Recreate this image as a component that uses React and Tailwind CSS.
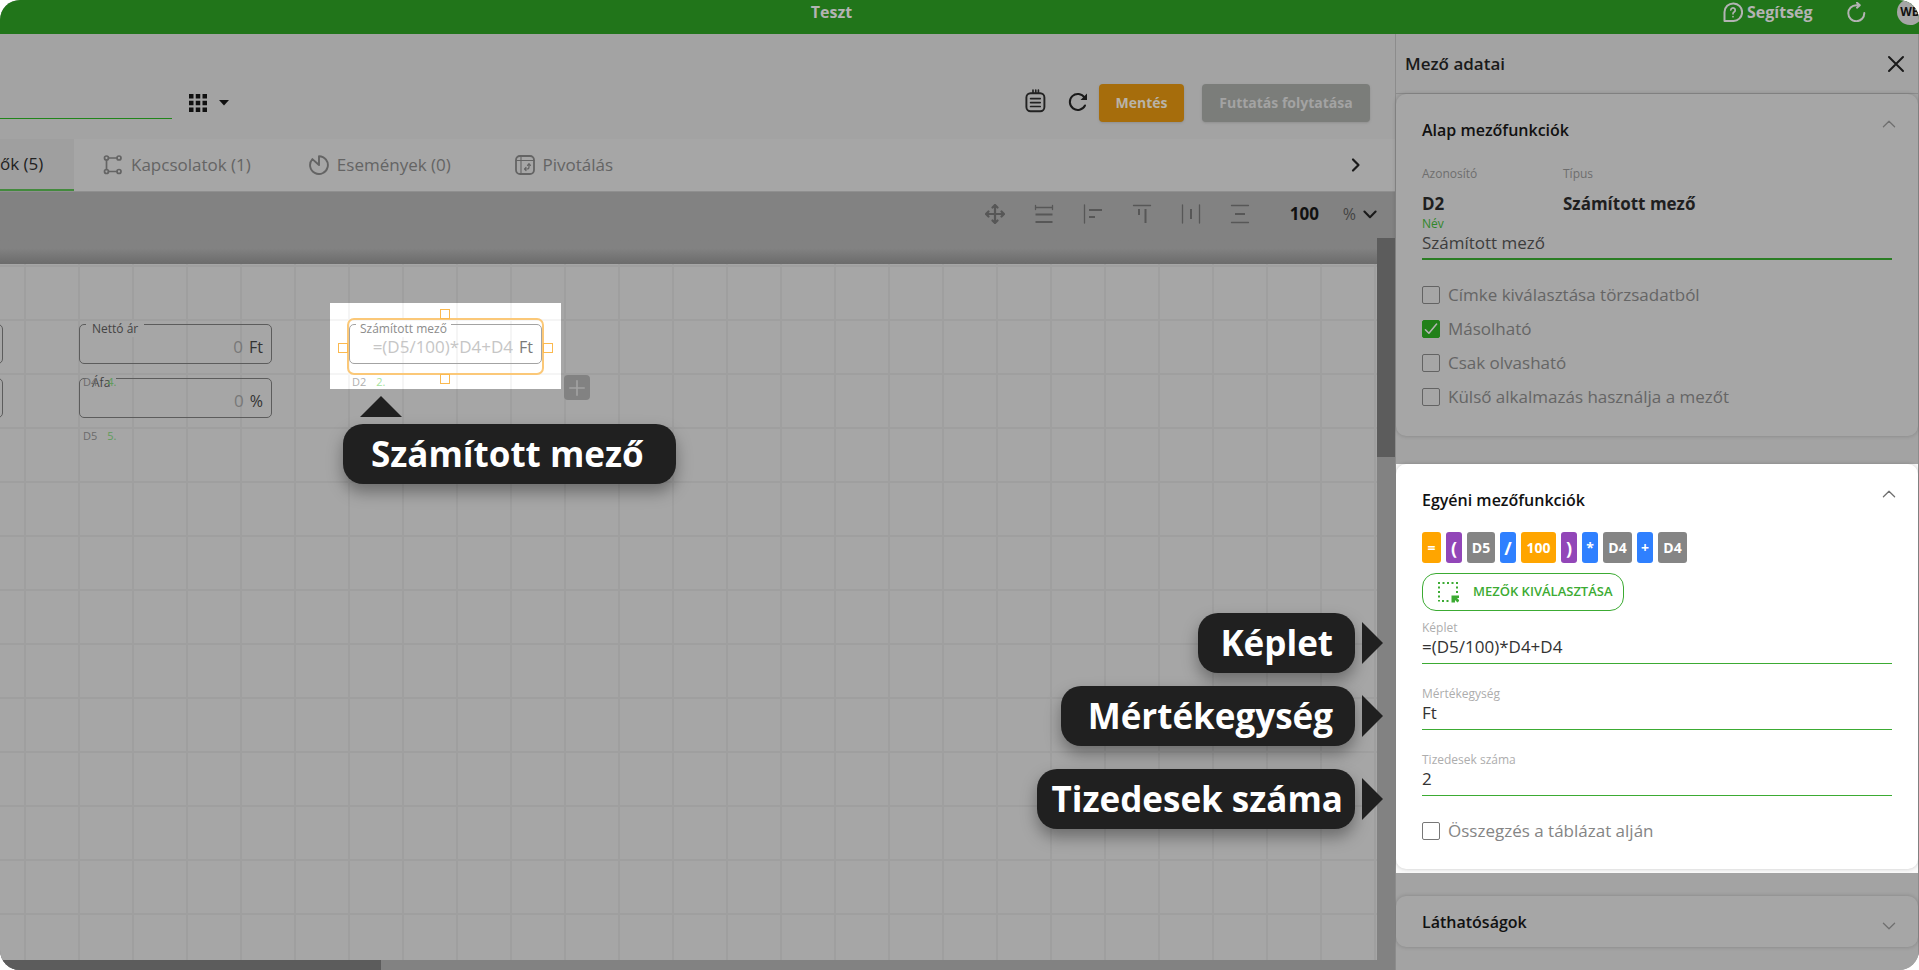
import React, { useState } from 'react';

const tabs = [
  { label: 'Kapcsolatok (1)', icon: 'links' },
  { label: 'Események (0)', icon: 'events' },
  { label: 'Pivotálás', icon: 'pivot' },
];

const formula = [
  { text: '=', className: 'w-[19px] bg-[#ffa500] text-sm' },
  { text: '(', className: 'w-4 bg-[#9246b8] text-lg' },
  { text: 'D5', className: 'w-7 bg-[#858585] text-sm' },
  { text: '/', className: 'w-4 bg-[#2f80ff] text-lg' },
  { text: '100', className: 'w-[35px] bg-[#ffa500] text-sm' },
  { text: ')', className: 'w-4 bg-[#9246b8] text-lg' },
  { text: '*', className: 'w-4 bg-[#2f80ff] text-sm' },
  { text: 'D4', className: 'w-[29px] bg-[#858585] text-sm' },
  { text: '+', className: 'w-4 bg-[#2f80ff] text-sm' },
  { text: 'D4', className: 'w-[29px] bg-[#858585] text-sm' },
];

const Svg = ({ className = 'h-5 w-5', width = 1.6, children }) => (
  <svg
    viewBox="0 0 20 20"
    className={`shrink-0 ${className}`}
    fill="none"
    stroke="currentColor"
    strokeWidth={width}
    strokeLinecap="round"
    strokeLinejoin="round"
    aria-hidden="true"
  >
    {children}
  </svg>
);

const TabIcon = ({ name }) => {
  if (name === 'links') {
    return (
      <Svg width={1.7}>
        <circle cx="3.5" cy="3" r="2" />
        <circle cx="16" cy="3" r="2" />
        <circle cx="3.5" cy="16.5" r="2" />
        <circle cx="16" cy="16.5" r="2" />
        <path d="M5.5 3H14M3.5 5v9.5M5.5 16.5H14" />
      </Svg>
    );
  }
  if (name === 'events') {
    return (
      <Svg width={1.9}>
        <path d="M10 10V1.2a8.9 8.9 0 1 1-6.6 2.9L10 10" />
      </Svg>
    );
  }
  return (
    <Svg width={1.8}>
      <rect x="1" y="1" width="18" height="18" rx="4" />
      <path d="M6 1v18M1 5.5h18" strokeWidth="1.1" />
      <path d="M14 9v3a2 2 0 0 1-2 2H9.5M12.500 10.300L14 8.700l1.500 1.600M11 12.500L9.500 14l1.500 1.500" strokeWidth="1.2" />
    </Svg>
  );
};

const tools = [
  {
    label: 'Mozgatás',
    icon: (
      <Svg width={2.2}>
        <path d="M10 1v18M1 10h18M7.5 3.5L10 1l2.5 2.5M7.5 16.5L10 19l2.5-2.5M3.5 7.5L1 10l2.5 2.5M16.5 7.5L19 10l-2.5 2.5" />
      </Svg>
    ),
  },
  {
    label: 'Azonos szélesség',
    icon: (
      <Svg width={1.3}>
        <path d="M1.5 1.5v4M18.5 1.5v4M1.5 3.5h17" />
        <path d="M1.5 10.5h17M1.5 18h17" strokeWidth="2" strokeLinecap="butt" />
      </Svg>
    ),
  },
  {
    label: 'Balra igazítás',
    icon: (
      <Svg width={1.3}>
        <path d="M1.5 1v18" />
        <path d="M6 6h13M6 13h6" strokeWidth="2" strokeLinecap="butt" />
      </Svg>
    ),
  },
  {
    label: 'Felülre igazítás',
    icon: (
      <Svg width={1.3}>
        <path d="M1.5 1.5h17" />
        <path d="M7 5v6M13.5 5v14" strokeWidth="2" strokeLinecap="butt" />
      </Svg>
    ),
  },
  {
    label: 'Vízszintes elosztás',
    icon: (
      <Svg width={1.3}>
        <path d="M1.5 1v18M18.5 1v18" />
        <path d="M10 5v10" strokeWidth="2" strokeLinecap="butt" />
      </Svg>
    ),
  },
  {
    label: 'Függőleges elosztás',
    icon: (
      <Svg width={1.3}>
        <path d="M1.5 1.5h17M1.5 18.5h17" />
        <path d="M5 10h10" strokeWidth="2" strokeLinecap="butt" />
      </Svg>
    ),
  },
];

const TopBar = () => (
  <header className="flex h-[34px] items-center overflow-hidden bg-[#21751a] pb-2.5 text-[#b3b3b3]">
    <h1 className="flex-1 text-center text-base font-bold">Teszt</h1>
    <div className="flex w-64 shrink-0 items-center pl-[60px]">
      <a href="#help" className="flex w-[123px] shrink-0 items-center gap-1 text-base font-bold">
        <Svg width={2}>
          <path d="M1.5 19V10A8.8 8.8 0 1 1 10 19Z" />
          <path d="M7.8 8a2.2 2.2 0 1 1 3.300 2c-.8.5-1.1.9-1.1 1.800M10 14.600v.1" strokeWidth="1.7" />
        </Svg>
        Segítség
      </a>
      <button aria-label="Frissítés" className="w-[51px] shrink-0">
        <Svg width={2}>
          <path d="M13 3.200H10.300A8 8 0 1 0 18.300 11M11 .7l2.800 2.500L11 5.700" />
        </Svg>
      </button>
      <span className="flex h-[26px] w-[26px] shrink-0 items-center justify-center rounded-full bg-[#a6a6a6] text-xs font-bold text-[#111]">
        WB
      </span>
    </div>
  </header>
);

const ActionBar = () => (
  <div className="flex h-[105px] items-center justify-between bg-[#a3a3a3] pr-[25px] pt-8">
    <div className="flex items-center">
      <input aria-label="Név keresése" className="h-8 w-[172px] border-b border-[#21851a] bg-transparent outline-none" />
      <button aria-label="Nézet" className="ml-4 flex items-center gap-[11px] text-[#111]">
        <svg viewBox="0 0 20 20" className="h-5 w-5" fill="currentColor" aria-hidden="true">
          <path d="M1 1h4.500v4.500H1zM7.750 1h4.500v4.500h-4.500zM14.500 1H19v4.500h-4.500zM1 7.750h4.500v4.500H1zM7.750 7.750h4.500v4.500h-4.500zM14.500 7.750H19v4.500h-4.500zM1 14.500h4.500V19H1zM7.750 14.500h4.500V19h-4.500zM14.500 14.500H19V19h-4.500z" />
        </svg>
        <svg viewBox="0 0 10 6" className="h-1.5 w-2.5" fill="currentColor" aria-hidden="true">
          <path d="M0 0h10L5 5.500z" />
        </svg>
      </button>
    </div>
    <div className="flex items-center">
      <button aria-label="Napló" className="mr-5 pb-1 text-[#222]">
        <Svg className="h-6 w-6" width={1.6}>
          <rect x="2" y="3.500" width="15" height="15" rx="3.500" />
          <path d="M5.500 8h8M5.500 11.300h8M5.500 14.600h8M7.500 1v2.500M9.800 1v2.500M12 1v2.500" strokeWidth="1.400" />
        </Svg>
      </button>
      <button aria-label="Újratöltés" className="mr-[11px] pb-0.5 text-[#1a1a1a]">
        <Svg width={2}>
          <path d="M17 13.500A8 8 0 1 1 16.500 5.500" />
          <path d="M19 1.500v6.500h-6.500z" fill="currentColor" stroke="none" />
        </Svg>
      </button>
      <button className="mr-[18px] h-[38px] w-[85px] rounded-sm bg-[#a66d0c] text-sm font-bold text-[#b8b3a8] shadow-sm">
        Mentés
      </button>
      <button className="h-[38px] w-[168px] rounded-sm bg-[#7b7d7a] text-sm font-bold text-[#a3a3a3] shadow-sm">
        Futtatás folytatása
      </button>
    </div>
  </div>
);

const TabBar = () => (
  <nav className="flex h-[53px] items-stretch border-b border-[#8f8f8f] bg-[#a6a6a6] text-[17px] font-medium text-[#646464]">
    <button className="w-[74px] border-b-2 border-[#438a3d] bg-[#9f9f9f] text-left text-[#222]">ők (5)</button>
    {tabs.map((tab) => (
      <button key={tab.label} className="flex min-w-[168px] items-center justify-center gap-2 px-[29px]">
        <TabIcon name={tab.icon} />
        {tab.label}
      </button>
    ))}
    <button aria-label="Következő fül" className="ml-auto mr-[29px] text-[#1a1a1a]">
      <Svg width={2.2}>
        <path d="M7 4.500l5.500 5.500L7 15.500" />
      </Svg>
    </button>
  </nav>
);

const ToolBar = () => (
  <div className="flex h-[46px] items-center justify-end bg-[#828282] pb-0.5 pr-[17px] text-[#575757]">
    <div className="flex items-center gap-[29px]">
      {tools.map((tool) => (
        <button key={tool.label} aria-label={tool.label}>
          {tool.icon}
        </button>
      ))}
    </div>
    <input
      aria-label="Nagyítás"
      defaultValue="100"
      className="ml-10 w-[53px] bg-transparent text-[17px] font-bold text-[#111] outline-none"
    />
    <button aria-label="Nagyítás egysége" className="flex items-center gap-1.5 text-base text-[#444]">
      %
      <Svg className="h-4 w-4 text-[#1a1a1a]" width={2.6}>
        <path d="M3 7l7 7 7-7" />
      </Svg>
    </button>
  </div>
);

const CanvasField = ({ id, label, unit, code, order, className }) => (
  <div className={`absolute w-[193px] ${className}`}>
    <div className="relative flex h-10 items-center gap-1.5 rounded-[5px] border border-[#5c5c5c] px-2 pt-1.5">
      <label htmlFor={id} className="absolute -top-1 left-1.5 bg-[#a6a6a6] px-1.5 text-xs leading-4 font-medium text-[#444]">
        {label}
      </label>
      <input id={id} defaultValue="0" className="w-0 flex-1 bg-transparent text-right text-[17px] text-[#787878] outline-none" />
      <span className="text-base font-medium text-[#333]">{unit}</span>
    </div>
    <div className="absolute left-1 top-[50px] flex gap-2.5 text-[11px] leading-4 text-[#6b6b6b]">
      <span>{code}</span>
      <span className="text-[#619c5c]">{order}</span>
    </div>
  </div>
);

const SelectedField = () => (
  <div className="absolute left-[330px] top-[39px] h-[86px] w-[231px] overflow-hidden bg-white bg-[linear-gradient(to_right,#f5f5f5_2px,transparent_2px),linear-gradient(to_bottom,#f5f5f5_2px,transparent_2px)] bg-[size:54px_54px] bg-[position:18px_16px]">
    <div className="absolute left-[17px] top-[15px] h-[57px] w-[197px] rounded-[7px] border-2 border-[#fbc878]">
      <div className="relative mt-1 flex h-10 items-center gap-1.5 rounded-[5px] border border-[#a3a3a3] px-2 pt-1.5">
        <label htmlFor="d2" className="absolute -top-1 left-1.5 bg-white px-1 text-xs leading-4 font-medium text-[#8c8c8c]">
          Számított mező
        </label>
        <input
          id="d2"
          defaultValue="=(D5/100)*D4+D4"
          className="w-0 flex-1 bg-transparent text-right text-[17px] text-[#c6c6c6] outline-none"
        />
        <span className="text-base font-medium text-[#7a7a7a]">Ft</span>
      </div>
    </div>
    <i className="absolute left-[110px] top-1.5 h-2.5 w-2.5 border border-[#fbb94f]" />
    <i className="absolute left-[110px] top-[71px] h-2.5 w-2.5 border border-[#fbb94f]" />
    <i className="absolute left-2 top-10 h-2.5 w-2.5 border border-[#fbb94f]" />
    <i className="absolute left-[213px] top-10 h-2.5 w-2.5 border border-[#fbb94f]" />
    <div className="absolute left-[22px] top-[71px] flex gap-2.5 text-[11px] leading-4 text-[#b0b0b0]">
      <span>D2</span>
      <span className="text-[#a6e3a1]">2.</span>
    </div>
  </div>
);

const Bubble = ({ children, className }) => (
  <div
    className={`flex h-[60px] items-center rounded-[20px] bg-[#202020] pb-0.5 text-[35px] font-bold leading-none text-white shadow-[0_8px_16px_rgba(0,0,0,0.35)] ${className}`}
  >
    {children}
  </div>
);

const SideHint = ({ children, top, className }) => (
  <div className={`absolute right-3 flex items-center gap-[7px] ${top}`}>
    <Bubble className={className}>{children}</Bubble>
    <svg viewBox="0 0 21 42" className="h-[42px] w-[21px]" aria-hidden="true">
      <path d="M0 0l21 21L0 42z" fill="#202020" />
    </svg>
  </div>
);

const Canvas = () => (
  <div className="relative flex min-h-[732px] flex-1 flex-col bg-[#828282]">
    <div className="flex flex-1">
      <div className="flex min-w-0 flex-1 flex-col">
        <div className="h-[26px] bg-linear-to-b from-[#828282] from-40% to-[#6b6b6b]" />
        <div className="relative flex-1 overflow-hidden bg-[#a6a6a6] bg-[linear-gradient(to_right,#9f9f9f_2px,transparent_2px),linear-gradient(to_bottom,#9f9f9f_2px,transparent_2px)] bg-[size:54px_54px] bg-[position:24px_55px]">
          <div className="absolute -left-2 top-[60px] h-10 w-[11px] rounded-[5px] border border-[#5c5c5c]" />
          <div className="absolute -left-2 top-[114px] h-10 w-[11px] rounded-[5px] border border-[#5c5c5c]" />
          <CanvasField id="d5" label="Áfa" unit="%" code="D5" order="5." className="left-[79px] top-[114px]" />
          <CanvasField id="d4" label="Nettó ár" unit="Ft" code="D4" order="4." className="left-[79px] top-[60px]" />
          <SelectedField />
          <button
            aria-label="Új mező"
            className="absolute left-[564px] top-[111px] flex h-[25px] w-[26px] items-center justify-center rounded-sm bg-[#828282] text-[#a3a3a3]"
          >
            <Svg className="h-4 w-4" width={2}>
              <path d="M10 1v18M1 10h18" />
            </Svg>
          </button>
        </div>
      </div>
      <div className="w-[18px] bg-[#828282]">
        <div className="h-[219px] bg-[#5c5c5c]" />
      </div>
    </div>
    <div className="flex h-2.5 bg-[#828282]">
      <div className="w-[381px] bg-[#5c5c5c]" />
    </div>

    <div className="absolute left-[343px] top-[158px]">
      <svg viewBox="0 0 42 21" className="mb-[7px] ml-[17px] h-[21px] w-[42px]" aria-hidden="true">
        <path d="M21 0l21 21H0z" fill="#202020" />
      </svg>
      <Bubble className="w-[333px] pl-7">Számított mező</Bubble>
    </div>
    <SideHint top="top-[375px]" className="w-[157px] justify-end pr-[22px]">Képlet</SideHint>
    <SideHint top="top-[448px]" className="w-[294px] justify-end pr-[22px]">Mértékegység</SideHint>
    <SideHint top="top-[531px]" className="w-[318px] justify-end pr-3">Tizedesek száma</SideHint>
  </div>
);

const Card = ({ title, open = true, lit = false, children }) => (
  <section className={`rounded-[10px] px-[26px] shadow-[0_0_4px_rgba(0,0,0,0.2)] ${lit ? 'bg-white' : 'bg-[#a6a6a6]'}`}>
    <button
      aria-expanded={open}
      className={`flex w-full items-center justify-between text-base font-semibold text-[#111] ${open ? 'h-[68px] pt-1' : 'h-[51px]'}`}
    >
      {title}
      <Svg className={`-mr-1 h-3.5 w-3.5 text-[#707070] ${open ? '-mt-3' : 'mt-2'}`} width={1.8}>
        <path d={open ? 'M2 14l8-8 8 8' : 'M2 6l8 8 8-8'} />
      </Svg>
    </button>
    {children}
  </section>
);

const Check = ({ id, label, defaultChecked = false, lit = false }) => {
  const [checked, setChecked] = useState(defaultChecked);
  return (
    <div className="flex h-[34px] items-center gap-2">
      <span className="relative flex h-[18px] w-[18px]">
        <input
          id={id}
          type="checkbox"
          checked={checked}
          onChange={(e) => setChecked(e.target.checked)}
          className={`h-[18px] w-[18px] appearance-none rounded-xs border checked:border-[#218019] checked:bg-[#218019] ${
            lit ? 'border-[#777]' : 'border-[#636363]'
          }`}
        />
        {checked && (
          <Svg className="pointer-events-none absolute left-0.5 top-0.5 h-3.5 w-3.5 text-[#b5b5b5]" width={2.2}>
            <path d="M2 11l5 5L18 3" />
          </Svg>
        )}
      </span>
      <label htmlFor={id} className={`text-[17px] leading-5 font-medium ${lit ? 'text-[#858585]' : 'text-[#656565]'}`}>
        {label}
      </label>
    </div>
  );
};

const LineField = ({ id, label, value }) => (
  <div className="flex flex-col">
    <label htmlFor={id} className="text-xs leading-4 font-medium text-[#adadad]">{label}</label>
    <input
      id={id}
      defaultValue={value}
      className="h-7 border-b border-[#3cab33] bg-transparent pb-1.5 text-[17px] text-[#333] outline-none"
    />
  </div>
);

const SidePanel = () => (
  <aside className="flex w-[524px] shrink-0 flex-col border-l border-r border-[#8c8c8c] bg-[#a3a3a3]">
    <div className="flex h-[60px] items-center justify-between border-b border-[#8c8c8c] pl-[9px] pr-3">
      <h2 className="text-[17px] font-semibold text-[#1a1a1a]">Mező adatai</h2>
      <button aria-label="Bezárás" className="text-[#1a1a1a]">
        <Svg width={2}>
          <path d="M3 3l14 14M17 3L3 17" />
        </Svg>
      </button>
    </div>

    <Card title="Alap mezőfunkciók">
      <dl className="grid grid-cols-[141px_1fr] text-[#1f1f1f]">
        <dt className="h-[30px] text-xs leading-6 font-medium text-[#6e6e6e]">Azonosító</dt>
        <dt className="h-[30px] text-xs leading-6 font-medium text-[#6e6e6e]">Típus</dt>
        <dd className="text-[17px] leading-6 font-bold">D2</dd>
        <dd className="text-[17px] leading-6 font-bold">Számított mező</dd>
      </dl>
      <div className="flex flex-col pb-[18px]">
        <label htmlFor="name" className="text-xs leading-4 font-medium text-[#31862b]">Név</label>
        <input
          id="name"
          defaultValue="Számított mező"
          className="h-7 border-b-2 border-[#2a7d24] bg-transparent pb-1.5 text-[17px] text-[#3d3d3d] outline-none"
        />
      </div>
      <div className="pb-[22px]">
        <Check id="master" label="Címke kiválasztása törzsadatból" />
        <Check id="copy" label="Másolható" defaultChecked />
        <Check id="readonly" label="Csak olvasható" />
        <Check id="external" label="Külső alkalmazás használja a mezőt" />
      </div>
    </Card>

    <div className="mt-7 bg-[#fafafa] pb-1">
      <Card title="Egyéni mezőfunkciók" lit>
        <div className="flex gap-[5px]">
          {formula.map((part, i) => (
            <span
              key={i}
              className={`flex h-[31px] items-center justify-center rounded-[3px] font-bold text-white ${part.className}`}
            >
              {part.text}
            </span>
          ))}
        </div>
        <button className="mt-2.5 flex h-[38px] w-[202px] items-center gap-3.5 rounded-[14px] border border-[#3cab33] pl-3.5 text-[13px] font-semibold whitespace-nowrap text-[#3cab33]">
          <svg viewBox="0 0 22 22" className="h-[22px] w-[22px] shrink-0" fill="none" stroke="currentColor" strokeWidth="2" aria-hidden="true">
            <path d="M1 2h20" strokeDasharray="2 2.500" />
            <path d="M2 5.500v15M20 5.500v7" strokeDasharray="2 2.500" />
            <path d="M5 20h8" strokeDasharray="2 2.500" />
            <path d="M14.500 14.500H22v2.500h-2l2.500 2.500-2 2L18 19v2.500h-3.500z" fill="currentColor" stroke="none" />
          </svg>
          MEZŐK KIVÁLASZTÁSA
        </button>
        <div className="mt-[9px] flex flex-col gap-[22px]">
          <LineField id="formula" label="Képlet" value="=(D5/100)*D4+D4" />
          <LineField id="unit" label="Mértékegység" value="Ft" />
          <LineField id="decimals" label="Tizedesek száma" value="2" />
        </div>
        <div className="pb-[21px] pt-[18px]">
          <Check id="sum" label="Összegzés a táblázat alján" lit />
        </div>
      </Card>
    </div>

    <div className="mt-[23px]">
      <Card title="Láthatóságok" open={false} />
    </div>
  </aside>
);

const App = () => (
  <div className="bg-white">
    <div className="flex min-h-screen flex-col overflow-hidden rounded-[20px] bg-[#a3a3a3] font-['Open_Sans',sans-serif]">
      <TopBar />
      <div className="flex flex-1">
        <main className="flex min-w-0 flex-1 flex-col">
          <ActionBar />
          <TabBar />
          <ToolBar />
          <Canvas />
        </main>
        <SidePanel />
      </div>
    </div>
  </div>
);

export default App;
